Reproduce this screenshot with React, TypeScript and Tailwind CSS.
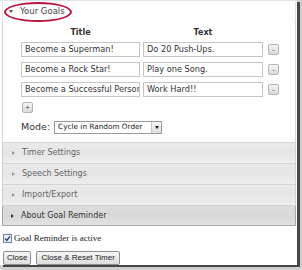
import React from "react";

const goals = [
  { title: "Become a Superman!", text: "Do 20 Push-Ups." },
  { title: "Become a Rock Star!", text: "Play one Song." },
  { title: "Become a Successful Person", text: "Work Hard!!" },
];

const sections = ["Timer Settings", "Speech Settings", "Import/Export"];

const sans = "font-['DejaVu_Sans',Verdana,sans-serif]";

function MiniButton({ label }: { label: string }) {
  return (
    <div className="w-[11px] h-[11px] flex items-center justify-center rounded-[2px] border border-[#b4b4b4] bg-gradient-to-b from-[#f4f4f4] to-[#dcdcdc] text-[8px] leading-none text-[#555] font-['Liberation_Sans',sans-serif]">
      {label}
    </div>
  );
}

function Field({ value, w }: { value: string; w: string }) {
  return (
    <div
      className={`${w} h-[15px] border border-[#c4c4c4] bg-white px-[3px] flex items-center overflow-hidden whitespace-nowrap text-[8.2px] text-[#333] ${sans}`}
    >
      {value}
    </div>
  );
}

export default function App() {
  return (
    <div className="w-[302px] h-[270px] bg-[#cfcfcf] overflow-hidden">
      <div className="relative w-[297px] h-[265px] bg-white border-t border-[#e2e2e2] shadow-[3px_2px_0_#474747]">
        {/* red annotation ellipse */}
        <div className="absolute left-[4px] top-[1px] w-[68px] h-[20px] rounded-[50%] border-2 border-[#b8163c]" />

        <div className="ml-[2px] w-[294px] mt-[1px]">
          {/* Your Goals header */}
          <div className="h-[19px] flex items-center border-x border-[#e0e0e0] bg-white">
            <span className="ml-[6px] w-0 h-0 border-x-[2.5px] border-x-transparent border-t-[3px] border-t-[#555]" />
            <span className={`ml-[7px] text-[8.5px] text-[#444] ${sans}`}>Your Goals</span>
          </div>

          {/* Goals content */}
          <div className="border-x border-b border-[#d6d6d6] pl-[18px] pt-[7px] pb-[8px]">
            <div className={`flex h-[10px] items-center text-[8px] font-bold text-[#333] ${sans}`}>
              <div className="w-[119px] text-center">Title</div>
              <div className="ml-[3px] w-[120px] text-center">Text</div>
            </div>
            <div className="mt-[4px] flex flex-col gap-[5px]">
              {goals.map((g) => (
                <div key={g.title} className="flex items-center">
                  <Field value={g.title} w="w-[119px]" />
                  <div className="ml-[3px]">
                    <Field value={g.text} w="w-[120px]" />
                  </div>
                  <div className="ml-[5px]">
                    <MiniButton label="-" />
                  </div>
                </div>
              ))}
            </div>
            <div className="mt-[5px] ml-[1px]">
              <MiniButton label="+" />
            </div>
            <div className="mt-[8px] flex items-center h-[13px]">
              <span className={`text-[9.5px] text-[#333] ${sans}`}>Mode:</span>
              <div className="ml-[4px] w-[108px] h-[13px] border border-[#9a9a9a] flex items-center bg-white">
                <span className={`flex-1 pl-[3px] text-[7.3px] text-[#222] whitespace-nowrap ${sans}`}>
                  Cycle in Random Order
                </span>
                <div className="w-[10px] h-[11px] border-l border-[#c8c8c8] bg-gradient-to-b from-[#f6f6f6] to-[#dedede] flex items-center justify-center">
                  <span className="w-0 h-0 border-x-[2.5px] border-x-transparent border-t-[3px] border-t-[#111]" />
                </div>
              </div>
            </div>
          </div>

          {/* Collapsed sections */}
          {sections.map((s) => (
            <div
              key={s}
              className="h-[21px] flex items-center border-x border-b border-[#d3d3d3] bg-gradient-to-b from-[#eaeaea] via-[#e6e6e6] to-[#eeeeee]"
            >
              <span className="ml-[9px] w-0 h-0 border-y-[2.5px] border-y-transparent border-l-[3px] border-l-[#9a9a9a]" />
              <span className={`ml-[7px] text-[8px] text-[#666] ${sans}`}>{s}</span>
            </div>
          ))}
          <div className="h-[20px] flex items-center border border-t-0 border-[#a8a8a8] bg-gradient-to-b from-[#dcdcdc] via-[#d9d9d9] to-[#e2e2e2]">
            <span className="ml-[8px] w-0 h-0 border-y-[2.5px] border-y-transparent border-l-[3px] border-l-[#333]" />
            <span className={`ml-[7px] text-[8px] text-[#333] ${sans}`}>About Goal Reminder</span>
          </div>
        </div>

        {/* Active checkbox */}
        <div className="mt-[7px] ml-[3px] h-[10px] flex items-center gap-[2px]">
          <svg width="9" height="9" viewBox="0 0 9 9">
            <rect x="0.5" y="0.5" width="8" height="8" fill="#e8eef6" stroke="#6d84a3" />
            <path d="M2 4.5 L3.8 6.4 L7 2.3" fill="none" stroke="#2a3f72" strokeWidth="1.3" />
          </svg>
          <span className="text-[9px] leading-none text-[#222] font-['Liberation_Serif',serif]">Goal Reminder is active</span>
        </div>

        {/* Buttons */}
        <div className="mt-[8px] ml-[3px] flex gap-[5px]">
          <div className="h-[14px] px-[3px] flex items-center border border-[#8f8f8f] rounded-[2px] bg-gradient-to-b from-[#f5f5f5] to-[#dddddd] text-[8px] text-[#222] font-['Liberation_Sans',sans-serif]">
            Close
          </div>
          <div className="h-[14px] px-[4px] flex items-center border border-[#8f8f8f] rounded-[2px] bg-gradient-to-b from-[#f5f5f5] to-[#dddddd] text-[8px] text-[#222] font-['Liberation_Sans',sans-serif]">
            Close &amp; Reset Timer
          </div>
        </div>
      </div>
    </div>
  );
}
